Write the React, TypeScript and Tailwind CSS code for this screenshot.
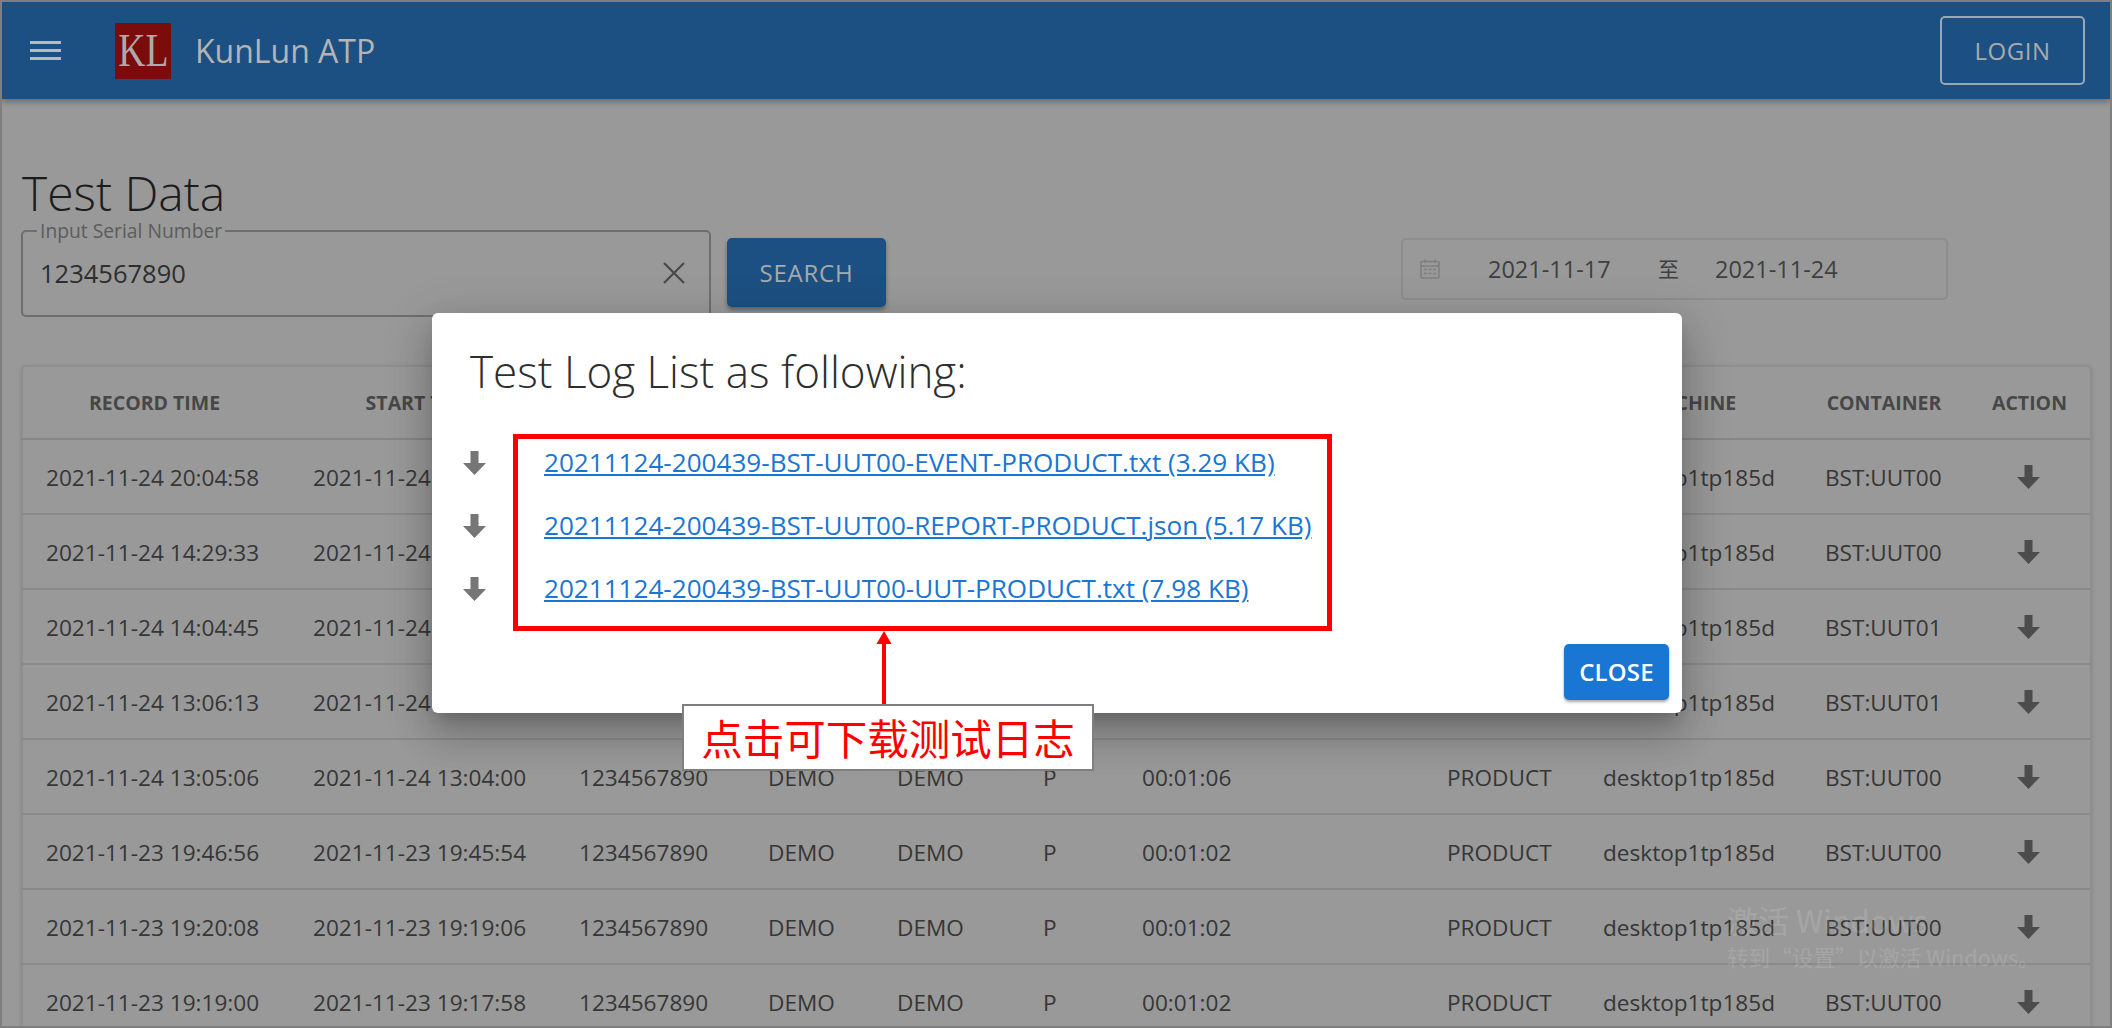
import React from "react";

const COLS = "grid grid-cols-[267px_267px_189px_129px_146px_99px_305px_156px_222px_166px_125px]";

const Arrow = ({ className }: { className: string }) => (
  <svg viewBox="0 0 23 24" className={className} fill="currentColor">
    <path d="M7.5 0h8v12h7.5L11.5 24 0 12h7.5z" />
  </svg>
);

const rows = [
  { rec: "2021-11-24 20:04:58", start: "2021-11-24 20:03:52", time: "", box: "BST:UUT00", covered: true },
  { rec: "2021-11-24 14:29:33", start: "2021-11-24 14:28:27", time: "", box: "BST:UUT00", covered: true },
  { rec: "2021-11-24 14:04:45", start: "2021-11-24 14:03:39", time: "", box: "BST:UUT01", covered: true },
  { rec: "2021-11-24 13:06:13", start: "2021-11-24 13:05:07", time: "", box: "BST:UUT01", covered: true },
  { rec: "2021-11-24 13:05:06", start: "2021-11-24 13:04:00", time: "00:01:06", box: "BST:UUT00", covered: false },
  { rec: "2021-11-23 19:46:56", start: "2021-11-23 19:45:54", time: "00:01:02", box: "BST:UUT00", covered: false },
  { rec: "2021-11-23 19:20:08", start: "2021-11-23 19:19:06", time: "00:01:02", box: "BST:UUT00", covered: false },
  { rec: "2021-11-23 19:19:00", start: "2021-11-23 19:17:58", time: "00:01:02", box: "BST:UUT00", covered: false },
];

const heads = ["RECORD TIME", "START TIME", "", "", "", "", "", "", "MACHINE", "CONTAINER", "ACTION"];

const links = [
  "20211124-200439-BST-UUT00-EVENT-PRODUCT.txt (3.29 KB)",
  "20211124-200439-BST-UUT00-REPORT-PRODUCT.json (5.17 KB)",
  "20211124-200439-BST-UUT00-UUT-PRODUCT.txt (7.98 KB)",
];

export default function App() {
  return (
    <div className="relative h-[1028px] w-[2112px] overflow-hidden border-2 border-[#7f7f7f] bg-[#999999] font-['Open_Sans',sans-serif] text-[#363636]">
      <header className="relative z-10 flex h-[97px] items-center bg-[#1c5082] shadow-[0_3px_6px_rgba(0,0,0,0.3)]">
        <svg viewBox="0 0 31 19" className="ml-[28px] h-[19px] w-[31px] text-[#b9b9b9]" fill="currentColor">
          <rect width="31" height="3" y="0" />
          <rect width="31" height="3" y="8" />
          <rect width="31" height="3" y="16" />
        </svg>
        <div className="ml-[54px] flex h-[56px] w-[56px] items-center justify-center overflow-hidden bg-[#7a0c0c] font-['Liberation_Serif',serif] text-[47px] leading-none text-[#ababab]">
          <span className="scale-x-[0.8]">KL</span>
        </div>
        <div className="ml-[24px] text-[32px] text-[#b4b4b4]">KunLun ATP</div>
        <button className="ml-auto mr-[25px] flex h-[69px] w-[145px] items-center justify-center rounded-[5px] border-2 border-[#9aa7b5] text-[24px] font-medium tracking-[0.5px] text-[#aaaaaa]">
          LOGIN
        </button>
      </header>

      <main className="px-[19px] pt-[67px]">
        <h1 className="ml-px h-[54px] text-[48px] font-light leading-[54px] text-[#1c1c1c]">Test Data</h1>
        <div className="flex items-start">
          <fieldset className="relative h-[97px] w-[690px] rounded-[5px] border-2 border-[#6f6f6f] pl-[14px]">
            <legend className="px-[3px] text-[19.3px] leading-[22px] text-[#5c5c5c]">Input Serial Number</legend>
            <div className="mt-[15px] flex items-center pl-[3px] pr-[24px] text-[25.5px] leading-[32px] text-[#2e2e2e]">
              <span className="flex-1">1234567890</span>
              <svg viewBox="0 0 22 22" className="h-[22px] w-[22px] text-[#4a4a4a]" fill="none" stroke="currentColor" strokeWidth="2.2">
                <path d="M1 1l20 20M21 1L1 21" />
              </svg>
            </div>
          </fieldset>
          <button className="ml-[16px] mt-[18px] flex h-[69px] w-[159px] items-center justify-center rounded-[5px] bg-[#1c5082] text-[24px] font-medium tracking-[0.8px] text-[#a9a9a9] shadow-[0_3px_4px_rgba(0,0,0,0.35)]">
            SEARCH
          </button>
          <div className="ml-[515px] mt-[18px] flex h-[62px] w-[547px] items-center whitespace-nowrap rounded-[5px] border-2 border-[#8d8d8d] pl-[17px] text-[23.5px] text-[#3f3f3f]">
            <svg viewBox="0 0 20 20" className="h-[20px] w-[20px] shrink-0 text-[#808080]" fill="none" stroke="currentColor" strokeWidth="1.6">
              <rect x="1" y="2.5" width="18" height="16.5" rx="1" />
              <path d="M1 7h18M5 0.5v3M15 0.5v3" />
              <path d="M4 10.5h12M4 14.5h12" strokeDasharray="3 1.5" />
            </svg>
            <span className="ml-[48px] w-[122px] translate-y-[1px]">2021-11-17</span>
            <span className="ml-[48px] w-[22px] font-['Noto_Sans_CJK_SC',sans-serif] text-[21px]">至</span>
            <span className="ml-[35px] translate-y-[1px]">2021-11-24</span>
          </div>
        </div>

        <div className="mt-[49px] w-[2071px] rounded-t-[5px] border-x-2 border-t border-[#8e8e8e] shadow-[0_0_4px_rgba(0,0,0,0.12)]">
          <div className={`${COLS} -ml-[2px] h-[73px] items-center border-b-2 border-[#868686] text-center text-[19.5px] font-bold text-[#474747]`}>
            {heads.map((h, i) => (
              <div key={i} className="whitespace-nowrap pt-[1px]">{h}</div>
            ))}
          </div>
          {rows.map((r) => (
            <div key={r.rec} className={`${COLS} -ml-[2px] h-[75px] items-center border-b-2 border-[#8a8a8a] pt-[2px] text-[22.6px]`}>
              <div className="pl-[25px] whitespace-nowrap">{r.rec}</div>
              <div className="pl-[25px] whitespace-nowrap">{r.start}</div>
              <div className="pl-[24px]">{r.covered ? "" : "1234567890"}</div>
              <div className="pl-[24px]">{r.covered ? "" : "DEMO"}</div>
              <div className="pl-[24px]">{r.covered ? "" : "DEMO"}</div>
              <div className="pl-[24px]">{r.covered ? "" : "P"}</div>
              <div className="pl-[24px]">{r.time}</div>
              <div className="pl-[24px]">{r.covered ? "" : "PRODUCT"}</div>
              <div className="pl-[24px]">desktop1tp185d</div>
              <div className="pl-[24px]">{r.box}</div>
              <div className="flex -translate-x-px -translate-y-px justify-center">
                <Arrow className="h-[24px] w-[23px] text-[#4c4c4c]" />
              </div>
            </div>
          ))}
        </div>
      </main>

      {/* modal dialog */}
      <div className="absolute left-[430px] top-[311px] z-20 flex h-[400px] w-[1250px] flex-col rounded-[6px] bg-white shadow-[0_11px_15px_-7px_rgba(0,0,0,0.2),0_24px_38px_3px_rgba(0,0,0,0.14),0_9px_46px_8px_rgba(0,0,0,0.12)]">
        <h2 className="h-[118px] pl-[38px] pt-[33px] text-[44px] font-light leading-[50px] text-[#2e2e2e]">Test Log List as following:</h2>
        {links.map((l) => (
          <div key={l} className="flex h-[63px] items-center pl-[31px]">
            <Arrow className="h-[24px] w-[23px] text-[#767676]" />
            <a href="#" className="ml-[58px] whitespace-nowrap text-[26.1px] text-[#1976d2] underline">{l}</a>
          </div>
        ))}
        <button className="ml-auto mr-[13px] mt-auto mb-[13px] flex h-[56px] w-[105px] items-center justify-center rounded-[5px] bg-[#1976d2] text-[24px] font-semibold tracking-[0.2px] text-white shadow-[0_2px_3px_rgba(0,0,0,0.35)]">
          CLOSE
        </button>
      </div>

      {/* annotation */}
      <div className="absolute left-[511px] top-[432px] z-30 h-[197px] w-[819px] border-[5px] border-[#ff0000]" />
      <svg viewBox="0 0 16 74" className="absolute left-[874px] top-[629px] z-30 h-[74px] w-[16px] text-[#ff0000]" fill="currentColor">
        <path d="M8 0l7.5 13H10v61H6V13H.5z" />
      </svg>
      <div className="absolute left-[680px] top-[702px] z-30 flex h-[67px] w-[412px] items-center justify-center border-2 border-[#7f7f7f] bg-white font-['Noto_Sans_CJK_SC',sans-serif] text-[41.5px] leading-none text-[#ff0000]">
        点击可下载测试日志
      </div>

      {/* OS watermark */}
      <div className="pointer-events-none absolute left-[1725px] top-[896px] z-40 whitespace-nowrap font-['Noto_Sans_CJK_SC',sans-serif] text-white/15">
        <div className="text-[31px] leading-[44px]">激活 Windows</div>
        <div className="text-[21.6px] leading-[30px]">转到“设置”以激活 Windows。</div>
      </div>
    </div>
  );
}
